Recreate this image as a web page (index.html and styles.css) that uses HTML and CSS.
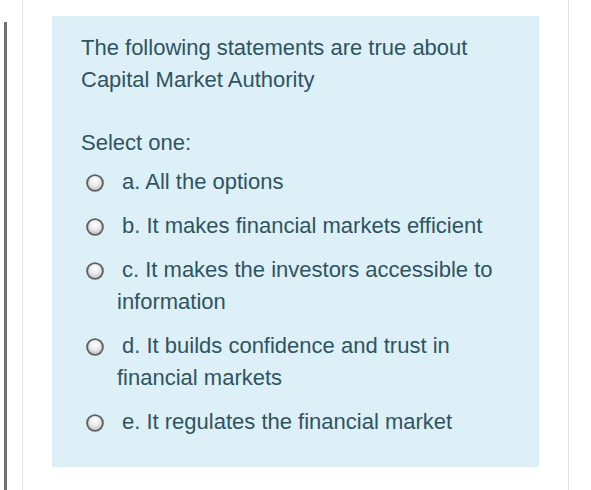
FILE: index.html
```html
<!DOCTYPE html>
<html>
<head>
<meta charset="utf-8">
<link rel="stylesheet" href="styles.css">
</head>
<body>
<div class="page">
  <div class="bar"></div>
  <div class="divider"></div>
  <div class="que">
    <div class="qtext">The following statements are true about Capital Market Authority</div>
    <div class="prompt">Select one:</div>
    <div class="answers">
      <div class="opt"><svg class="radio" viewBox="0 0 18 18"><defs><radialGradient id="rg" cx="50%" cy="35%" r="65%"><stop offset="0" stop-color="#ffffff"/><stop offset="0.5" stop-color="#ebebeb"/><stop offset="1" stop-color="#b9b9b9"/></radialGradient></defs><circle cx="9" cy="9" r="7.9" fill="url(#rg)" stroke="#5b6366" stroke-width="1.9"/></svg>a. All the options</div>
      <div class="opt"><svg class="radio" viewBox="0 0 18 18"><circle cx="9" cy="9" r="7.9" fill="url(#rg)" stroke="#5b6366" stroke-width="1.9"/></svg>b. It makes financial markets efficient</div>
      <div class="opt"><svg class="radio" viewBox="0 0 18 18"><circle cx="9" cy="9" r="7.9" fill="url(#rg)" stroke="#5b6366" stroke-width="1.9"/></svg>c. It makes the investors accessible to information</div>
      <div class="opt"><svg class="radio" viewBox="0 0 18 18"><circle cx="9" cy="9" r="7.9" fill="url(#rg)" stroke="#5b6366" stroke-width="1.9"/></svg>d. It builds confidence and trust in financial markets</div>
      <div class="opt"><svg class="radio" viewBox="0 0 18 18"><circle cx="9" cy="9" r="7.9" fill="url(#rg)" stroke="#5b6366" stroke-width="1.9"/></svg>e. It regulates the financial market</div>
    </div>
  </div>
  <div class="divider right"></div>
</div>
</body>
</html>
```
FILE: styles.css
```css
html, body {
  margin: 0;
  padding: 0;
  background: #ffffff;
}
.page {
  display: flex;
  align-items: flex-start;
  height: 490px;
  padding-left: 4px;
  overflow: hidden;
  font-family: "Liberation Sans", Arial, sans-serif;
  font-size: 22px;
  line-height: 32px;
  color: #2f5461;
}
.bar {
  width: 3px;
  align-self: stretch;
  margin-top: 22px;
  background: #717171;
}
.divider {
  width: 1px;
  align-self: stretch;
  margin-left: 15px;
  background: #e6e6e6;
}
.divider.right {
  margin-left: 29px;
  background: #e0e0e0;
}
.que {
  box-sizing: border-box;
  width: 487px;
  height: 451px;
  margin-top: 16px;
  margin-left: 29px;
  padding: 16px 20px 0 29px;
  background: #ddf0f7;
}
.qtext {
  margin-bottom: 31px;
}
.prompt {
  margin-bottom: 7px;
}
.opt {
  padding-left: 36px;
  text-indent: -31px;
  margin-bottom: 12px;
}
.radio {
  display: inline-block;
  width: 18px;
  height: 18px;
  margin-right: 18px;
  vertical-align: -3px;
}
```
